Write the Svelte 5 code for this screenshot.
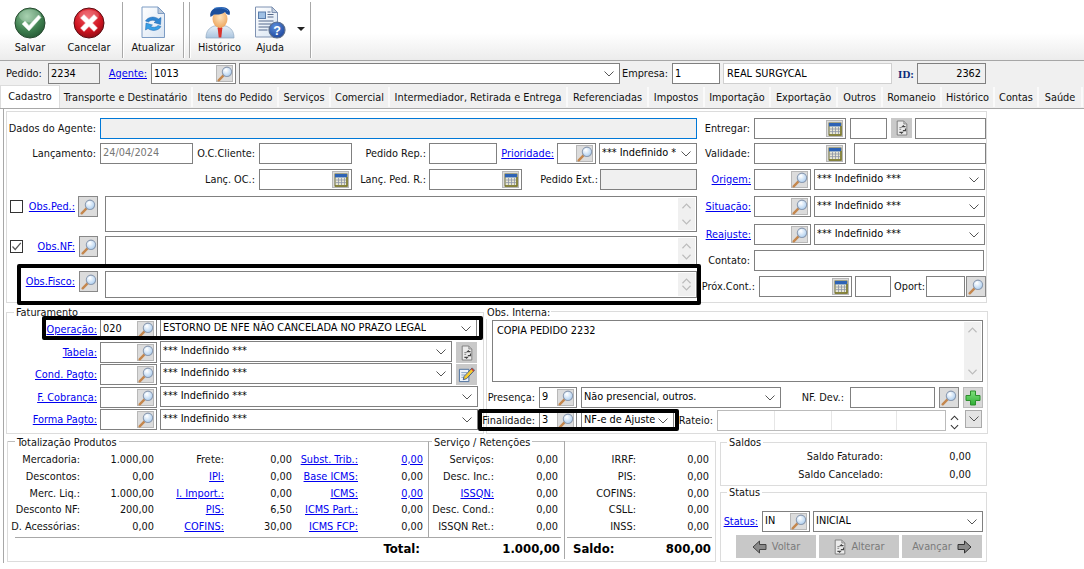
<script>
  // Form layout described by page coordinates; margins and widths are computed so the rows stay in normal flow.
  const IND = '*** Indefinido ***';
  const place = (rows, ox, oy) => {
    let py = oy;
    return rows.map((r) => {
      const mt = r.y - py;
      const h = r.h ?? 21;
      py = r.y + h;
      let px = ox;
      const items = r.items.map((it) => {
        const o = { ...it, ml: it.x - px, w: it.x2 - it.x };
        px = it.x2;
        return o;
      });
      return { mt, h, items };
    });
  };
  const lab = (text, x, x2, c = '', extra = {}) => ({ t: 'lab', text, x, x2, c, ...extra });
  const link = (text, x, x2, extra = {}) => lab(text, x, x2, 'link', extra);
  const inp = (x, x2, v = '', c = '', tool = '', extra = {}) => ({ t: 'fld', x, x2, v, c, tool, ...extra });
  const combo = (x, x2, v = IND, c = '') => ({ t: 'combo', x, x2, v, c });
  const area = (x, x2, h, v = '') => ({ t: 'area', x, x2, h, v });
  const btn = (x, x2, icon, h = 21, c = '', extra = {}) => ({ t: 'btn', x, x2, icon, h, c, ...extra });
  const chk = (x, x2, on) => ({ t: 'chk', x, x2, on });

  const tools = [
    { label: 'Salvar', w: 60, ic: 'save' },
    { label: 'Cancelar', w: 58, ic: 'cancel' },
    { sep: true, ml: 4 },
    { label: 'Atualizar', w: 60, ic: 'refresh' },
    { sep: true },
    { sep: true, ml: 5 },
    { label: 'Histórico', w: 59, ic: 'person' },
    { label: 'Ajuda', w: 42, ic: 'help' },
    { caret: true, w: 19 },
    { sep: true }
  ];

  const infoRow = place([{ y: 63, items: [
    lab('Pedido:', 6, 44, 'left'), inp(48, 100, '2234', 'dis'),
    link('Agente:', 100, 147), inp(151, 236, '1013', '', 'mag'),
    combo(239, 620, ''), lab('Empresa:', 620, 668), inp(672, 720, '1'),
    inp(723, 892, 'REAL SURGYCAL', 'soft'), lab('ID:', 894, 914, 'idlab'), inp(917, 986, '2362', 'dis right')
  ] }], 0, 61);

  const tabBounds = [
    ['Cadastro', 0, 60], ['Transporte e Destinatário', 60, 193], ['Itens do Pedido', 193, 279],
    ['Serviços', 279, 331], ['Comercial', 331, 390], ['Intermediador, Retirada e Entrega', 390, 568],
    ['Referenciadas', 568, 649], ['Impostos', 649, 705], ['Importação', 705, 771], ['Exportação', 771, 838],
    ['Outros', 838, 883], ['Romaneio', 883, 942], ['Histórico', 942, 995], ['Contas', 995, 1039], ['Saúde', 1039, 1083]
  ];

  const leftRows = place([
    { y: 118, items: [lab('Dados do Agente:', 7, 96), inp(100, 697, '', 'dis blue')] },
    { y: 143, items: [lab('Lançamento:', 7, 96), inp(100, 193, '24/04/2024', 'muted'), lab('O.C.Cliente:', 193, 255), inp(259, 352), lab('Pedido Rep.:', 352, 426), inp(429, 497), link('Prioridade:', 497, 554), inp(557, 596, '', '', 'mag'), combo(599, 697, IND, 'tight')] },
    { y: 169, items: [lab('Lanç. OC.:', 7, 255), inp(259, 352, '', '', 'cal'), lab('Lanç. Ped. R.:', 352, 426), inp(429, 522, '', '', 'cal'), lab('Pedido Ext.:', 522, 598), inp(600, 697, '', 'dis')] },
    { y: 196, h: 36, items: [chk(10, 23, false), link('Obs.Ped.:', 23, 75), btn(78, 98, 'mag'), area(105, 697, 36)] },
    { y: 236, h: 31, items: [chk(10, 23, true), link('Obs.NF:', 23, 75), btn(79, 98, 'mag'), area(105, 697, 31)] },
    { y: 271, h: 27, items: [link('Obs.Fisco:', 23, 75), btn(79, 98, 'mag'), area(105, 697, 27)] }
  ], 7, 112);

  const rightRows = place([
    { y: 118, items: [lab('Entregar:', 698, 750), inp(754, 846, '', '', 'cal'), inp(850, 887), btn(891, 912, 'doc', 20, 'flat'), inp(915, 986)] },
    { y: 143, items: [lab('Validade:', 698, 750), inp(754, 846, '', '', 'cal'), inp(854, 986)] },
    { y: 169, items: [link('Origem:', 698, 751), inp(754, 811, '', '', 'mag'), combo(814, 985)] },
    { y: 196, items: [link('Situação:', 698, 751), inp(754, 811, '', '', 'mag'), combo(814, 985)] },
    { y: 224, items: [link('Reajuste:', 698, 751), inp(754, 811, '', '', 'mag'), combo(814, 985)] },
    { y: 250, items: [lab('Contato:', 698, 750), inp(754, 984)] },
    { y: 276, items: [lab('Próx.Cont.:', 698, 755), inp(759, 852, '', '', 'cal'), inp(855, 891), lab('Oport:', 891, 925), inp(926, 965), btn(966, 986, 'mag')] }
  ], 698, 112);

  const fatRows = place([
    { y: 319, h: 21, items: [link('Operação:', 7, 97), inp(100, 157, '020', '', 'mag'), combo(160, 477, 'ESTORNO DE NFE NÃO CANCELADA NO PRAZO LEGAL')] },
    { y: 342, h: 21, items: [link('Tabela:', 7, 97), inp(100, 157, '', '', 'mag'), combo(160, 452), btn(456, 477, 'doc', 21, 'flat')] },
    { y: 364, h: 21, items: [link('Cond. Pagto:', 7, 97), inp(100, 157, '', '', 'mag'), combo(160, 452), btn(456, 477, 'edit', 21, 'flat')] },
    { y: 387, h: 21, items: [link('F. Cobrança:', 7, 97), inp(100, 157, '', '', 'mag'), combo(160, 478)] },
    { y: 409, h: 21, items: [link('Forma Pagto:', 7, 97), inp(100, 157, '', '', 'mag'), combo(160, 478)] }
  ], 7, 313);

  const obsRows = place([
    { y: 320, h: 62, items: [area(491, 982, 62, 'COPIA PEDIDO 2232')] },
    { y: 387, h: 21, items: [lab('Presença:', 486, 534), inp(538, 576, '9', '', 'mag'), combo(580, 780, 'Não presencial, outros.'), lab('NF. Dev.:', 780, 843), inp(849, 934), btn(938, 958, 'mag'), btn(962, 982, 'plus', 21, 'lite')] },
    { y: 410, h: 21, items: [lab('Finalidade:', 486, 534), inp(538, 576, '3', '', 'mag'), combo(580, 673, 'NF-e de Ajuste'), lab('Rateio:', 673, 712), { t: 'rateio', x: 716, x2: 945 }, { t: 'spin', x: 948, x2: 958 }, { t: 'drop', x: 964, x2: 981 }] }
  ], 486, 312);

  const trow = (y, cells) => ({ y, h: 17, items: cells });
  const ys = [451, 468, 485, 501, 518];
  const colA = [
    ['Mercadoria:', '1.000,00', 'Frete:', 0, '0,00', 'Subst. Trib.:', 1, '0,00', 1],
    ['Descontos:', '0,00', 'IPI:', 1, '0,00', 'Base ICMS:', 1, '0,00', 0],
    ['Merc. Liq.:', '1.000,00', 'I. Import.:', 1, '0,00', 'ICMS:', 1, '0,00', 1],
    ['Desconto NF:', '200,00', 'PIS:', 1, '6,50', 'ICMS Part.:', 1, '0,00', 0],
    ['D. Acessórias:', '0,00', 'COFINS:', 1, '30,00', 'ICMS FCP:', 1, '0,00', 0]
  ];
  const totalA = place(colA.map((r, i) => trow(ys[i], [
    lab(r[0], 8, 80), lab(r[1], 80, 154),
    lab(r[2], 154, 224, r[3] ? 'link' : ''), lab(r[4], 224, 292),
    lab(r[5], 292, 358, r[6] ? 'link' : ''), lab(r[7], 358, 423, r[8] ? 'link' : '')
  ])), 8, 442);
  const colB = [['Serviços:', 0], ['Desc. Inc.:', 0], ['ISSQN:', 1], ['Desc. Cond.:', 0], ['ISSQN Ret.:', 0]];
  const totalB = place(colB.map((r, i) => trow(ys[i], [lab(r[0], 429, 494, r[1] ? 'link' : ''), lab('0,00', 494, 558)])), 429, 442);
  const colC = ['IRRF:', 'PIS:', 'COFINS:', 'CSLL:', 'INSS:'];
  const totalC = place(colC.map((t, i) => trow(ys[i], [lab(t, 566, 636), lab('0,00', 636, 709)])), 565, 442);

  const saldoRows = place([
    { y: 448, h: 17, items: [lab('Saldo Faturado:', 721, 883), lab('0,00', 883, 971)] },
    { y: 466, h: 17, items: [lab('Saldo Cancelado:', 721, 883), lab('0,00', 883, 971)] }
  ], 721, 443);
  const statusRows = place([
    { y: 511, h: 21, items: [link('Status:', 721, 758), inp(762, 810, 'IN', '', 'mag'), combo(813, 983, 'INICIAL')] }
  ], 721, 493);
  const actions = [{ t: 'Voltar', ic: 'left', w: 80 }, { t: 'Alterar', ic: 'doc', w: 80 }, { t: 'Avançar', ic: 'right', w: 80, rev: true }];

  const marks = [
    { c: 'm1' }, { c: 'm2' }, { c: 'm3' }
  ];
</script>

{#snippet icon(name)}
  {#if name === 'mag'}
    <svg class="ic" viewBox="0 0 17 17" width="16" height="16">
      <path d="M7.2 9.8 1.8 15.2" stroke="#c4874e" stroke-width="2.6" stroke-linecap="round" />
      <circle cx="10.6" cy="6.2" r="5" fill="url(#glass)" stroke="#8b9ab0" stroke-width="1.1" />
      <path d="M8 5a3 3 0 0 1 2.5-2" fill="none" stroke="#fff" stroke-width="1" />
    </svg>
  {:else if name === 'cal'}
    <svg class="ic" viewBox="0 0 14 14" width="14" height="14">
      <rect x="1" y="1" width="12" height="12" fill="#e9e8d6" stroke="#6b6a35" />
      <rect x="1" y="1" width="12" height="3.4" fill="#2d62b5" />
      <path d="M1.5 7h11M1.5 9.6h11M4.5 5v7M7.5 5v7M10.5 5v7" stroke="#8d94a6" stroke-width=".8" />
      <path d="M1 13h12V4" fill="none" stroke="#7d7a28" stroke-width="1.4" />
    </svg>
  {:else if name === 'doc'}
    <svg class="ic" viewBox="0 0 16 18" width="14" height="16">
      <path d="M2.5 1h7.5l3.5 3.5V17h-11z" fill="#ebebeb" stroke="#777" />
      <path d="M10 1v3.5h3.5" fill="#bbb" stroke="#777" stroke-width=".7" />
      <path d="M5 8.500h2.500M5 10.500h2" stroke="#777" />
      <path d="M12 7.500H8.500l1.500-1.500M5 14h3.500L7 15.500" fill="none" stroke="#444" stroke-width="1.300" />
      <path d="M12 9.500v2.500H9" fill="none" stroke="#444" stroke-width="1.300" />
    </svg>
  {:else if name === 'edit'}
    <svg class="ic" viewBox="0 0 18 18" width="17" height="17">
      <path d="M1.500 3.500h10v13h-10z" fill="#eef4fb" stroke="#4a6f9c" />
      <path d="M3.500 7h6M3.500 9.500h4M3.500 12h3" stroke="#7f9dc0" />
      <path d="M5.500 14.500l1-3.500 8.500-9 2.500 2.500-8.500 9z" fill="#f3c92f" stroke="#2d4f88" stroke-width=".9" />
      <path d="M14.200 2.800l2.500 2.500" stroke="#c33" stroke-width="1.400" />
    </svg>
  {:else if name === 'plus'}
    <svg class="ic" viewBox="0 0 16 16" width="16" height="16">
      <path d="M5.500 1h5v4.500H15v5h-4.500V15h-5v-4.500H1v-5h4.500z" fill="url(#plusg)" stroke="#2c8f2c" />
    </svg>
  {:else if name === 'left'}
    <svg class="ic" viewBox="0 0 16 14" width="16" height="14">
      <path d="M1 7 7.500 1v3.500H14v5H7.500V13z" fill="#8a8a8a" stroke="#444" />
    </svg>
  {:else if name === 'right'}
    <svg class="ic" viewBox="0 0 16 14" width="16" height="14">
      <path d="M15 7 8.500 1v3.500H2v5h6.500V13z" fill="#8a8a8a" stroke="#333" />
    </svg>
  {/if}
{/snippet}

{#snippet big(name)}
  {#if name === 'save'}
    <svg viewBox="0 0 32 32" width="32" height="32">
      <circle cx="16" cy="16" r="15" fill="url(#sgreen)" stroke="#26492f" stroke-width="1" />
      <ellipse cx="16" cy="9" rx="11" ry="6.500" fill="#fff" opacity=".22" />
      <path d="M8 17l3-3 4 4.500L24.500 8l2.500 2.500L15 24z" fill="#fff" stroke="#cfe5d2" stroke-width=".6" />
    </svg>
  {:else if name === 'cancel'}
    <svg viewBox="0 0 32 32" width="32" height="32">
      <circle cx="16" cy="16" r="15" fill="url(#sred)" stroke="#5b0c12" stroke-width="1" />
      <ellipse cx="16" cy="8.500" rx="10" ry="5.500" fill="#fff" opacity=".18" />
      <path d="M11 7.500l5 5 5-5 3.500 3.500-5 5 5 5-3.500 3.500-5-5-5 5L7.500 21l5-5-5-5z" fill="#fff" stroke="#f3c8cb" stroke-width=".5" />
    </svg>
  {:else if name === 'refresh'}
    <svg viewBox="0 0 26 33" width="26" height="33">
      <path d="M2 1h16l6.500 6.500V31.500H2z" fill="url(#paper)" stroke="#7d9cc4" />
      <path d="M18 1v6.500h6.500z" fill="#bcc9da" stroke="#7d9cc4" />
      <path d="M5.500 15a8 6.500 0 0 1 13-2l2.500-1.500-.5 7-6.500-2 2-1.300a5 4 0 0 0-7.500.8z" fill="#2f86d2" stroke="#1b63ad" stroke-width=".5" />
      <path d="M21 20.500a8 6.500 0 0 1-13 2L5.500 24l.5-7 6.500 2-2 1.300a5 4 0 0 0 7.500-.8z" fill="#38a0e6" stroke="#1b63ad" stroke-width=".5" />
    </svg>
  {:else if name === 'person'}
    <svg viewBox="0 0 30 33" width="30" height="33">
      <path d="M1 32c0-7 3-10 8-12h12c5 2 8 5 8 12z" fill="url(#shirt)" stroke="#8ea8c2" stroke-width=".7" />
      <path d="M13.500 20h3l.8 2.200-1 9.300h-2.600l-1-9.300z" fill="#d9332c" />
      <ellipse cx="15" cy="13" rx="7.500" ry="9" fill="url(#face)" />
      <path d="M5.500 11C4 5 9 1 16 1c6 0 10.500 3.500 8.500 8-3-.5-4-2-4.500-3C17 9 12 8.500 9 8.500c-1 .8-1.800 1.600-3.500 2.500z" fill="#1b4f9c" />
      <path d="M9 2.500C13 1 20 1.500 23 5" fill="none" stroke="#3f7fd0" stroke-width="1" />
    </svg>
  {:else if name === 'help'}
    <svg viewBox="0 0 32 33" width="32" height="33">
      <path d="M1.500 1h16.500l5.500 5.500V31H1.500z" fill="url(#paper)" stroke="#7f92b2" />
      <path d="M18 1v5.500h5.500z" fill="#c3cfdf" stroke="#7f92b2" />
      <rect x="4.500" y="6" width="7" height="6.500" fill="#9fc0e4" stroke="#5a7dab" />
      <path d="M13.500 6h3M13.500 8.500h6M13.500 11h6M4.500 15h15M4.500 18h13M4.500 21h11M4.500 24h9" stroke="#54698b" stroke-width="1.100" />
      <circle cx="23" cy="24" r="8" fill="url(#qblue)" stroke="#5c6e8b" stroke-width="1.200" />
      <text x="23" y="28.500" text-anchor="middle" font-family="Liberation Sans" font-weight="700" font-size="12.500" fill="#fff">?</text>
    </svg>
  {/if}
{/snippet}

{#snippet cell(it)}
  {#if it.t === 'lab'}
    <span class="lab {it.c}" style="margin-left:{it.ml}px;width:{it.w}px"><span class="labt">{it.text}</span></span>
  {:else if it.t === 'fld'}
    <div class="fld {it.c}" style="margin-left:{it.ml}px;width:{it.w}px">
      <span class="val">{it.v}</span>
      {#if it.tool}<span class="tool {it.tool}">{@render icon(it.tool)}</span>{/if}
    </div>
  {:else if it.t === 'combo'}
    <div class="fld combo {it.c}" style="margin-left:{it.ml}px;width:{it.w}px">
      <span class="val">{it.v}</span>
      <svg class="chev" viewBox="0 0 10 6" width="10" height="6"><path d="M.5.500 5 5 9.500.5" fill="none" stroke="#555" /></svg>
    </div>
  {:else if it.t === 'area'}
    <div class="area" style="margin-left:{it.ml}px;width:{it.w}px;height:{it.h}px">
      <span class="areat">{it.v}</span>
      <div class="sbar">
        <svg viewBox="0 0 10 6" width="9" height="6"><path d="M.5 5.500 5 1l4.500 4.500" fill="none" stroke="#bcbcbc" stroke-width="1.300" /></svg>
        <svg viewBox="0 0 10 6" width="9" height="6"><path d="M.5.500 5 5l4.500-4.500" fill="none" stroke="#bcbcbc" stroke-width="1.300" /></svg>
      </div>
    </div>
  {:else if it.t === 'btn'}
    <span class="ibtn {it.c}" style="margin-left:{it.ml}px;width:{it.w}px;height:{it.h}px">{@render icon(it.icon)}</span>
  {:else if it.t === 'chk'}
    <span class="chk" style="margin-left:{it.ml}px;width:{it.w}px">
      {#if it.on}<svg viewBox="0 0 11 11" width="11" height="11"><path d="M1.500 5.500 4.200 8.500 9.800 1.800" fill="none" stroke="#555" stroke-width="1.200" /></svg>{/if}
    </span>
  {:else if it.t === 'rateio'}
    <div class="rateio" style="margin-left:{it.ml}px;width:{it.w}px"><i class="r1"></i><i class="r2"></i><i class="r3"></i><i class="r4"></i></div>
  {:else if it.t === 'spin'}
    <span class="spin" style="margin-left:{it.ml}px;width:{it.w}px">
      <svg viewBox="0 0 10 6" width="9" height="6"><path d="M1 5 5 1l4 4" fill="none" stroke="#333" stroke-width="1.200" /></svg>
      <svg viewBox="0 0 10 6" width="9" height="6"><path d="M1 1l4 4 4-4" fill="none" stroke="#333" stroke-width="1.200" /></svg>
    </span>
  {:else if it.t === 'drop'}
    <span class="drop" style="margin-left:{it.ml}px;width:{it.w}px"><svg viewBox="0 0 10 6" width="10" height="6"><path d="M.5.500 5 5 9.500.5" fill="none" stroke="#555" /></svg></span>
  {/if}
{/snippet}

{#snippet flow(rows)}
  {#each rows as r}
    <div class="row" class:short={r.h === 17} style="margin-top:{r.mt}px;height:{r.h}px">
      {#each r.items as it}{@render cell(it)}{/each}
    </div>
  {/each}
{/snippet}

<svg class="defs" width="0" height="0" aria-hidden="true">
  <defs>
    <radialGradient id="sgreen" cx=".4" cy=".28" r=".85"><stop offset="0" stop-color="#8fc59a" /><stop offset=".55" stop-color="#3f8050" /><stop offset="1" stop-color="#1e4d2c" /></radialGradient>
    <radialGradient id="sred" cx=".45" cy=".3" r=".85"><stop offset="0" stop-color="#f2525c" /><stop offset=".55" stop-color="#cf1420" /><stop offset="1" stop-color="#6c0a10" /></radialGradient>
    <linearGradient id="paper" x1="0" y1="0" x2="1" y2="1"><stop offset="0" stop-color="#fff" /><stop offset="1" stop-color="#d8e4f2" /></linearGradient>
    <linearGradient id="shirt" x1="0" y1="0" x2="0" y2="1"><stop offset="0" stop-color="#e8f0f8" /><stop offset="1" stop-color="#a9c4de" /></linearGradient>
    <radialGradient id="face" cx=".5" cy=".4" r=".6"><stop offset="0" stop-color="#fde4bd" /><stop offset="1" stop-color="#eda65f" /></radialGradient>
    <radialGradient id="qblue" cx=".4" cy=".3" r=".8"><stop offset="0" stop-color="#5c8edb" /><stop offset="1" stop-color="#173f98" /></radialGradient>
    <radialGradient id="glass" cx=".4" cy=".35" r=".7"><stop offset="0" stop-color="#ffffff" /><stop offset="1" stop-color="#a9ccef" /></radialGradient>
    <linearGradient id="plusg" x1="0" y1="0" x2="0" y2="1"><stop offset="0" stop-color="#7fe07c" /><stop offset="1" stop-color="#2fae35" /></linearGradient>
  </defs>
</svg>

<div class="app">
  <header class="toolbar">
    {#each tools as t}
      {#if t.sep}
        <span class="tsep" class:gap5={t.ml === 5} class:gap4={t.ml === 4}></span>
      {:else if t.caret}
        <span class="caret" style="width:{t.w}px"></span>
      {:else}
        <span class="tbtn" style="width:{t.w}px">
          <span class="tic">{@render big(t.ic)}</span>
          <span class="tl">{t.label}</span>
        </span>
      {/if}
    {/each}
  </header>

  <div class="info">
    {@render flow(infoRow)}
  </div>

  <nav class="tabs">
    {#each tabBounds as t, i}
      <span class="tab" class:on={i === 0} style="width:{t[2] - t[1]}px">{t[0]}</span>
    {/each}
  </nav>

  <main class="page">
    <section class="box top">
      <div class="col leftc">{@render flow(leftRows)}</div>
      <div class="col rightc">{@render flow(rightRows)}</div>
    </section>

    <div class="mid">
      <section class="box fat">
        <span class="legend lg-fat">Faturamento</span>
        {@render flow(fatRows)}
      </section>
      <section class="box obs">
        <span class="legend lg-obs">Obs. Interna:</span>
        {@render flow(obsRows)}
      </section>
    </div>

    <div class="bottom">
      <section class="box totals">
        <div class="tleft">
          <div class="tcols">
            <div class="tcol a">
              <span class="legend lg-tot">Totalização Produtos</span>
              {@render flow(totalA)}
            </div>
            <div class="tcol b">
              <span class="legend lg-srv">Serviço / Retenções</span>
              {@render flow(totalB)}
            </div>
          </div>
          <div class="sum left">
            <b class="s1">Total:</b><b class="s2">1.000,00</b>
          </div>
        </div>
        <div class="tright">
          <div class="tcol c">{@render flow(totalC)}</div>
          <div class="sum right"><b>Saldo:</b><b>800,00</b></div>
        </div>
      </section>

      <div class="side">
        <section class="box saldos">
          <span class="legend lg-side">Saldos</span>
          {@render flow(saldoRows)}
        </section>
        <section class="box status">
          <span class="legend lg-side">Status</span>
          {@render flow(statusRows)}
          <div class="acts">
            {#each actions as a}
              <span class="act" style="width:{a.w}px">
                {#if a.rev}{a.t}{@render icon(a.ic)}{:else}{@render icon(a.ic)}{a.t}{/if}
              </span>
            {/each}
          </div>
        </section>
      </div>
    </div>

    {#each marks as m}<div class="mark {m.c}"></div>{/each}
  </main>
</div>

<style>
  :global(body) { margin: 0; background: #fff; }
  .defs { position: absolute; }
  .app {
    width: 1084px; height: 569px; overflow: hidden; position: relative; background: #fff;
    font: 10.85px/14px "DejaVu Sans Condensed", "Liberation Sans", sans-serif; color: #000;
  }
  .toolbar {
    height: 60px; display: flex; align-items: stretch; border-bottom: 1px solid #a6a6a6; box-sizing: content-box;
    background: linear-gradient(#fff 0, #fff 55%, #ececec 100%);
  }
  .tbtn { display: flex; flex-direction: column; align-items: center; padding-top: 6px; box-sizing: border-box; }
  .tic { height: 33px; display: flex; align-items: center; justify-content: center; }
  .tl { margin-top: 2px; line-height: 14px; color: #111; }
  .tsep { width: 1px; margin: 2px 0; background: #a8a8a8; box-shadow: 1px 0 0 #fff; }
  .gap4 { margin-left: 4px; }
  .gap5 { margin-left: 5px; }
  .caret { position: relative; }
  .caret::after {
    content: ''; position: absolute; left: 6px; top: 27px; border: 4px solid transparent; border-top-color: #222; border-bottom: 0;
  }

  .info { height: 25px; background: #f0f0f0; overflow: hidden; }
  .info .val { margin-top: 0; }
  .row { display: flex; align-items: flex-start; }
  .lab {
    flex: none; height: 21px; display: flex; align-items: center; justify-content: flex-end; white-space: nowrap;
    color: #111;
  }
  .lab.left { justify-content: flex-start; }
  .lab.link { color: #0000f0; }
  .lab.link .labt { text-decoration: underline; }
  .lab.idlab { font: bold 11px "Liberation Serif", serif; color: #0a2a7a; }
  .row.short .lab { height: 17px; }

  .fld {
    flex: none; height: 21px; box-sizing: border-box; border: 1px solid #808080; background: #fff;
    display: flex; align-items: center; position: relative; padding: 0 2px; overflow: hidden;
  }
  .fld.dis { background: #f0f0f0; }
  .fld.blue { border-color: #0078d7; }
  .fld.soft { border-color: #d0d0d0; padding-left: 3px; }
  .fld.muted .val { color: #777; }
  .fld.right { justify-content: flex-end; padding-right: 4px; }
  .val { white-space: nowrap; overflow: hidden; margin-top: -2px; }
  .combo { padding-right: 16px; }
  .combo.tight { padding-right: 20px; }
  .rightc .val { margin-top: -1px; }
  .fat .row:not(:last-of-type) .combo { margin-top: -1px; }
  .chev { position: absolute; right: 5px; top: 7px; }
  .tool {
    position: absolute; right: 2px; top: 1px; width: 17px; height: 17px; box-sizing: border-box;
    background: #dcdcdc; border: 1px solid #b8b8b8; display: flex; align-items: center; justify-content: center;
  }
  .ic { display: block; flex: none; }
  .ibtn {
    flex: none; box-sizing: border-box; display: flex; align-items: center; justify-content: center;
    background: #dcdcdc; border: 1px solid #888;
  }
  .ibtn.flat { background: #c9c9c9; border-color: #c9c9c9; }
  .ibtn.lite { background: #d8d8d8; border-color: #bbb; }
  .area {
    flex: none; box-sizing: border-box; border: 1px solid #808080; background: #fff; position: relative;
  }
  .areat { position: absolute; left: 4px; top: 3px; }
  .sbar {
    position: absolute; right: 1px; top: 1px; bottom: 1px; width: 17px; background: #f0f0f0;
    display: flex; flex-direction: column; align-items: center; justify-content: space-between; padding: 5px 0; box-sizing: border-box;
  }
  .chk {
    flex: none; height: 13px; box-sizing: border-box; border: 1px solid #333; margin-top: 4px; background: #fff;
    display: flex; align-items: center; justify-content: center;
  }
  .rateio { flex: none; height: 21px; box-sizing: border-box; border: 1px solid #bbb; display: flex; }
  .rateio i { display: block; border-right: 1px solid #e6e6e6; height: 100%; }
  .rateio .r1 { width: 56px; }
  .rateio .r2 { width: 56px; }
  .rateio .r3 { width: 64px; }
  .rateio .r4 { border: 0; flex: 1; }
  .spin { flex: none; display: flex; flex-direction: column; align-items: center; gap: 3px; padding-top: 5px; }
  .drop {
    flex: none; height: 18px; box-sizing: border-box; border: 1px solid #aaa; background: #e4e4e4;
    display: flex; align-items: center; justify-content: center;
  }

  .tabs { height: 23px; box-sizing: border-box; display: flex; background: #f0f0f0; border-bottom: 1px solid #a8a8a8; align-items: flex-start; }
  .tab {
    box-sizing: border-box; height: 20px; margin-top: 1px; padding-top: 1px; display: flex; align-items: center; justify-content: center;
    white-space: nowrap; color: #111; border-right: 2px solid #fafafa; background: #f0f0f0;
  }
  .tab.on { background: #fff; height: 23px; margin-top: -1px; border: 1px solid #dcdcdc; border-bottom: 0; padding: 0; position: relative; z-index: 1; }

  .page { position: relative; height: 460px; padding-left: 6px; padding-top: 2px; box-sizing: border-box; background: #fff; }
  .page::before { content: ''; position: absolute; left: 3px; top: 0; height: 454px; width: 1px; background: #a8a8a8; }
  .box { box-sizing: border-box; border: 1px solid #dcdcdc; background: #fff; position: relative; }
  .top { display: flex; width: 981px; height: 192px; }
  .col { display: flex; flex-direction: column; }
  .leftc { width: 691px; }
  .rightc { width: 288px; }
  .mid { display: flex; margin-top: 9px; align-items: flex-start; }
  .fat { width: 478px; height: 122px; }
  .obs { width: 502px; height: 123px; margin-top: -1px; margin-left: 2px; }
  .legend { position: absolute; background: #fff; padding: 0 2px; line-height: 12px; white-space: nowrap; color: #111; }
  .lg-fat { left: 7px; top: -6px; }
  .lg-obs { left: -1px; top: -5px; padding: 0 1px; }
  .bottom { display: flex; margin-top: 7px; align-items: flex-start; }
  .totals { display: flex; margin-left: 1px; width: 709px; height: 121px; border-top: 0; }
  .tleft { width: 556px; display: flex; flex-direction: column; }
  .tcols { display: flex; height: 96px; }
  .tcol { position: relative; box-sizing: border-box; border-top: 1px solid #bdbdbd; }
  .tcol.a { width: 421px; border-right: 1px solid #a8a8a8; }
  .tcol.b { width: 135px; }
  .tcol.c { height: 96px; border-top-color: #dcdcdc; }
  .lg-tot { left: 7px; top: -5px; }
  .lg-srv { left: 3px; top: -5px; }
  .sum { display: flex; font-size: 13px; line-height: 22px; border-top: 1px solid #a8a8a8; color: #000; }
  .sum.left { margin-left: 7px; width: 546px; }
  .sum.left .s1 { width: 405px; text-align: right; }
  .sum.left .s2 { width: 140px; text-align: right; }
  .tright { width: 151px; height: 118px; border-left: 1px solid #a8a8a8; }
  .sum.right { margin-left: 2px; width: 145px; justify-content: space-between; padding: 0 1px 0 6px; box-sizing: border-box; }
  .side { margin-left: 4px; display: flex; flex-direction: column; gap: 6px; margin-top: 1px; }
  .saldos { width: 267px; height: 44px; }
  .status { width: 267px; height: 70px; }
  .lg-side { left: 6px; top: -6px; }
  .acts { display: flex; gap: 3px; margin: 3px 0 0 15px; }
  .act {
    height: 23px; background: #c8c8c8; color: #7a7a7a; display: flex; align-items: center; justify-content: center; gap: 4px;
  }

  .mark { position: absolute; box-sizing: border-box; border: 4px solid #000; border-radius: 2px; pointer-events: none; }
  .m1 { left: 17px; top: 155px; width: 684px; height: 41px; }
  .m2 { left: 42px; top: 207px; width: 441px; height: 24px; }
  .m3 { left: 478px; top: 300px; width: 201px; height: 22px; }
</style>
